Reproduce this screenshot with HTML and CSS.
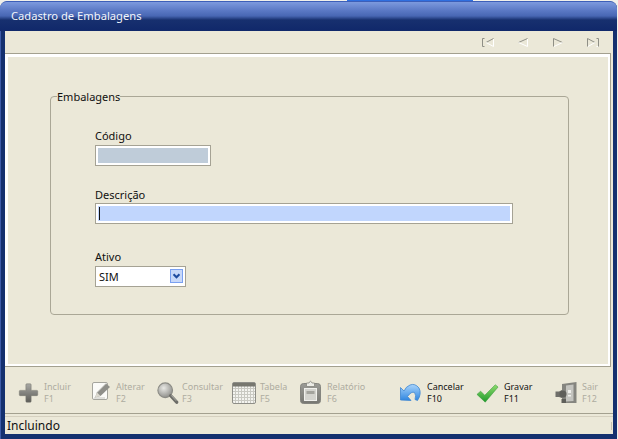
FILE: index.html
```html
<!DOCTYPE html>
<html lang="pt">
<head>
<meta charset="utf-8">
<title>Cadastro de Embalagens</title>
<link rel="stylesheet" href="styles.css">
</head>
<body>
<div class="desktop-tab"></div>
<div class="window">
  <header class="titlebar">Cadastro de Embalagens</header>
  <div class="client">
    <nav class="navbar">
      <svg class="nav-icon" viewBox="0 0 12 9"><path d="M2.500 .5H.5V8.500H2.500M11.500 .5L4 4.500" fill="none" stroke="#8f8f86"/><path d="M4 4.500L11.500 8.500V1" fill="none" stroke="#fff"/></svg>
      <svg class="nav-icon" viewBox="0 0 12 9"><path d="M10.500 .5L1.500 4.500" fill="none" stroke="#8f8f86"/><path d="M1.500 4.500L10.500 8.500V1" fill="none" stroke="#fff"/></svg>
      <svg class="nav-icon" viewBox="0 0 12 9"><path d="M1.500 8.500V.5L10.500 4.500" fill="none" stroke="#8f8f86"/><path d="M10.500 4.500L2 8.500" fill="none" stroke="#fff"/></svg>
      <svg class="nav-icon" viewBox="0 0 12 9"><path d="M.5 8.500V.5L8 4.500M9.500 .5H11.500V8.500" fill="none" stroke="#8f8f86"/><path d="M8 4.500L1 8.500M9.500 8.500H11" fill="none" stroke="#fff"/></svg>
    </nav>
    <main class="panel">
      <fieldset class="group">
        <legend>Embalagens</legend>
        <div class="field field-code">
          <label>Código</label>
          <div class="input input-code"></div>
        </div>
        <div class="field field-desc">
          <label>Descrição</label>
          <div class="input input-desc"><span class="caret"></span></div>
        </div>
        <div class="field field-active">
          <label>Ativo</label>
          <div class="select">
            <span>SIM</span>
            <span class="select-btn"><svg viewBox="0 0 13 14"><path d="M3 5L6.500 8.500L10 5" fill="none" stroke="#1d4a9e" stroke-width="2.400"/></svg></span>
          </div>
        </div>
      </fieldset>
    </main>
    <div class="toolbar">
      <div class="tool off">
        <svg class="icon" viewBox="0 0 24 24"><defs><linearGradient id="gplus" x1="0" y1="0" x2="0" y2="1"><stop offset="0" stop-color="#a8a8a4"/><stop offset="1" stop-color="#5c5c58"/></linearGradient></defs><path d="M9 2.500Q9 1.500 10 1.500H14Q15 1.500 15 2.500V9H21.500Q22.500 9 22.500 10V14Q22.500 15 21.500 15H15V21.500Q15 22.500 14 22.500H10Q9 22.500 9 21.500V15H2.500Q1.500 15 1.500 14V10Q1.500 9 2.500 9H9Z" fill="url(#gplus)" stroke="#77776f" stroke-width=".6"/></svg>
        <div class="tool-text"><span>Incluir</span><span>F1</span></div>
      </div>
      <div class="tool off">
        <svg class="icon" viewBox="0 0 21 22"><rect x="2.500" y=".5" width="15" height="17" rx="1.500" fill="#fbfbf8" stroke="#a5a59d"/><path d="M5 15.500L7 10.500L16 1.500L20 5L10.500 14Z" fill="#8f8f89"/><path d="M5 15.500L7 10.500L10.500 14Z" fill="#dcdad0"/><path d="M7 10.500L16 1.500" stroke="#c8c8c2" stroke-width=".8"/><path d="M4 16H15" stroke="#c5c5be"/></svg>
        <div class="tool-text"><span>Alterar</span><span>F2</span></div>
      </div>
      <div class="tool off">
        <svg class="icon icon-lupa" viewBox="0 0 24 24"><defs><radialGradient id="glens" cx=".4" cy=".35" r=".7"><stop offset="0" stop-color="#e8e8e4"/><stop offset="1" stop-color="#8a8a86"/></radialGradient></defs><circle cx="9.500" cy="9" r="8" fill="url(#glens)" stroke="#8b8b85" stroke-width="1.200"/><path d="M15.500 15L22 22" stroke="#6d6d68" stroke-width="3.600" stroke-linecap="round"/><path d="M16 14.500L21.500 20.500" stroke="#b3b3ad" stroke-width="1"/></svg>
        <div class="tool-text"><span>Consultar</span><span>F3</span></div>
      </div>
      <div class="tool off">
        <svg class="icon icon-wide" viewBox="0 0 24 22"><defs><pattern id="gcell" width="3" height="3" patternUnits="userSpaceOnUse"><rect width="3" height="3" fill="#f4f4f0"/><path d="M0 .5H3M.5 0V3" stroke="#c9c9c2"/></pattern></defs><rect x=".5" y=".5" width="23" height="21" rx="1.500" fill="url(#gcell)" stroke="#8e8e88"/><rect x="1" y="1" width="22" height="3.500" fill="#77776f"/></svg>
        <div class="tool-text"><span>Tabela</span><span>F5</span></div>
      </div>
      <div class="tool off">
        <svg class="icon icon-clip" viewBox="0 0 21 24"><defs><linearGradient id="gclip" x1="0" y1="0" x2="0" y2="1"><stop offset="0" stop-color="#9b9b96"/><stop offset="1" stop-color="#777772"/></linearGradient></defs><rect x=".5" y="3.500" width="20" height="20" rx="3" fill="url(#gclip)" stroke="#85857f"/><rect x="4.500" y="8.500" width="12" height="12" fill="#d3d3ce" stroke="#f0f0ec"/><rect x="6.500" y="11" width="8" height="3" fill="#a3a39d"/><path d="M6.500 6.500V3H9Q10.500 -.5 12 3H14.500V6.500Z" fill="#ecece6" stroke="#85857f" stroke-width=".8"/></svg>
        <div class="tool-text"><span>Relatório</span><span>F6</span></div>
      </div>
      <div class="tool">
        <svg class="icon icon-gap" viewBox="0 0 21 22"><defs><linearGradient id="gback" x1="0" y1="0" x2="0" y2="1"><stop offset="0" stop-color="#a9d4fb"/><stop offset="1" stop-color="#2f86e0"/></linearGradient></defs><path d="M.5 5.500L.5 18L11 18.500L7.500 14.500Q11.500 9 14.500 10.500Q16.500 13 15 17.500L17.500 18.500Q22 11.500 19 6Q15 1 10 3Q6 4.500 4 9Z" fill="url(#gback)" stroke="#3f86d2" stroke-width=".8"/></svg>
        <div class="tool-text"><span>Cancelar</span><span>F10</span></div>
      </div>
      <div class="tool">
        <svg class="icon icon-check" viewBox="0 0 24 24"><defs><linearGradient id="gok" x1="0" y1="0" x2="0" y2="1"><stop offset="0" stop-color="#8fdc6d"/><stop offset="1" stop-color="#1f9a2c"/></linearGradient></defs><path d="M.5 13.500L4.500 10L9 14.500L20.500 3L23.500 5.500L9.500 22Z" fill="url(#gok)" stroke="#3a9a3c" stroke-width=".6"/></svg>
        <div class="tool-text"><span>Gravar</span><span>F11</span></div>
      </div>
      <div class="tool off">
        <svg class="icon icon-door" viewBox="0 0 22 22"><path d="M7 2L21.500 0V21L7 21Z" fill="#85857f"/><path d="M11 3.500L18.500 2.500V19L11 19.500Z" fill="#c4c4bf"/><path d="M13 8H16V11H13ZM13 13H16V14.500H13Z" fill="#f0f0ec"/><path d="M.5 9.500H4L7 8V16L4 15H.5Z" fill="#6f6f6a"/><circle cx="8" cy="12" r="3.500" fill="#5f5f5a"/><path d="M6.500 17H11V21H6.500Z" fill="#5f5f5a"/></svg>
        <div class="tool-text"><span>Sair</span><span>F12</span></div>
      </div>
    </div>
    <footer class="status">
      <span>Incluindo</span>
      <i class="grip"></i>
    </footer>
  </div>
</div>
</body>
</html>
```

FILE: styles.css
```css
* { box-sizing: border-box; }
html, body { margin: 0; height: 100%; }
body {
  position: relative;
  width: 618px;
  height: 439px;
  overflow: hidden;
  background: #f1f0ea;
  font-family: "Noto Sans", "DejaVu Sans", sans-serif;
  font-size: 11px;
  color: #101010;
}
.desktop-tab {
  position: absolute;
  left: 347px;
  top: 0;
  width: 126px;
  height: 2px;
  background: #2f6fe0;
}
.window {
  position: relative;
  margin-top: 1px;
  width: 617px;
  height: 438px;
  display: flex;
  flex-direction: column;
  background: #14306f;
  border-radius: 7px 7px 0 0;
  padding: 0 4px 5px 4px;
  border-top: 1px solid #3d5fb8;
  border-left: 1px solid #3d5ba8;
}
.titlebar {
  margin: 0 -4px 0 -5px;
  height: 29px;
  padding: 5px 0 0 11px;
  color: #f2f5fb;
  font-size: 11.200px;
  line-height: 18px;
  border-radius: 6px 6px 0 0;
  background: linear-gradient(#7d9ade 0, #5a78c4 30%, #4867b4 48%, #17306f 62%, #10286a 100%);
}
.client {
  flex: 1;
  display: flex;
  flex-direction: column;
  background: #ebe8d8;
  min-height: 0;
}
.navbar {
  height: 22px;
  display: flex;
  justify-content: flex-end;
  padding: 7px 14px 0 0;
  gap: 23px;
}
.nav-icon { width: 12px; height: 9px; }
.panel {
  height: 315px;
  margin-right: 2px;
  padding: 36px 41px 0 45px;
  background: #ebe8d8;
  border-top: 1px solid #a3a08f;
  border-right: 1px solid #a3a08f;
  border-bottom: 1px solid #a3a08f;
  box-shadow: inset 3px 3px 0 #fff, inset -2px -2px 0 #fff;
}
.group {
  margin: 0;
  height: 225px;
  padding: 0 0 0 44px;
  border: 1px solid #aaa796;
  border-radius: 4px;
}
.group legend {
  margin-left: -38px;
  padding: 0;
  line-height: 13px;
}
.field { display: flex; flex-direction: column; align-items: flex-start; }
.field label { height: 14px; line-height: 14px; margin-bottom: 2px; }
.field-code { margin-top: 26px; }
.field-desc { margin-top: 22px; }
.field-desc label { margin-bottom: 1px; }
.field-active { margin-top: 26px; }
.input {
  height: 21px;
  border: 1px solid #a5a294;
  box-shadow: inset 0 0 0 2px #fff;
}
.input-code { width: 116px; background: #bfccd9; }
.input-desc { width: 418px; background: #c1d6fd; padding: 3px 0 0 3px; }
.caret { display: block; width: 1px; height: 13px; background: #101010; }
.select {
  width: 91px;
  height: 21px;
  border: 1px solid #a5a294;
  background: #fff;
  display: flex;
  align-items: center;
  justify-content: space-between;
  padding: 0 2px 0 3px;
  font-size: 11px;
}
.select-btn {
  width: 13px;
  height: 14px;
  border: 1px solid #7aa0f0;
  background: #c8d8f8;
  display: flex;
}
.select-btn svg { width: 100%; height: 100%; }
.toolbar {
  height: 47px;
  display: grid;
  grid-template-columns: 72px 66px 76px 68px 100px 76px 79px 1fr;
  align-items: center;
  padding: 4px 0 0 13px;
  border-bottom: 1px solid #a3a08f;
}
.tool { display: flex; align-items: center; color: #111; }
.tool.off { color: #aeaca0; }
.icon { width: 21px; height: 22px; flex: none; margin: 2px 5px 0 0; }
.icon-lupa { width: 23px; margin-right: 3px; }
.icon-wide { width: 24px; height: 22px; margin-right: 4px; }
.icon-clip { height: 24px; margin: 0 6px 0 0; }
.icon-gap { margin-right: 6px; }
.icon-check { width: 23px; margin-right: 5px; }
.icon-door { width: 22px; margin-right: 5px; }
.tool-text {
  display: flex;
  flex-direction: column;
  font-size: 9px;
  line-height: 12px;
  padding-top: 2px;
}
.status {
  flex: 1;
  margin-top: 2px;
  border-top: 1px solid #d5d0bf;
  padding-left: 2px;
  display: flex;
  justify-content: space-between;
  align-items: center;
  font-size: 12px;
}
.grip { width: 1px; height: 8px; background: #c4c1b1; margin-right: 1px; }
```
